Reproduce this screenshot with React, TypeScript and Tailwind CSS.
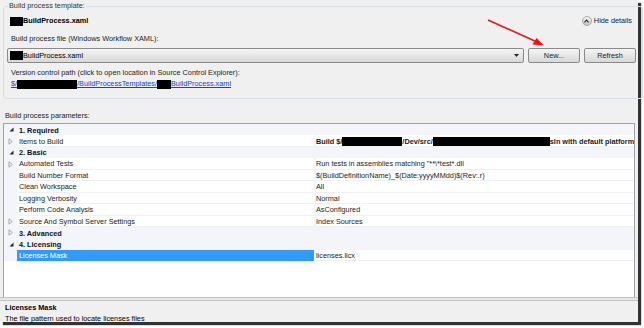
import React from "react";

type Row =
    | { kind: "cat"; label: string; open: boolean }
    | { kind: "prop"; label: string; value: React.ReactNode; expander?: boolean; selected?: boolean; bold?: boolean };

const Redact = ({ w }: { w: number }) => (
    <span className="inline-block h-[9px] bg-black align-middle shrink-0" style={{ width: w }} />
);

const ROWS: Row[] = [
    { kind: "cat", label: "1. Required", open: true },
    {
        kind: "prop",
        label: "Items to Build",
        expander: true,
        bold: true,
        value: (
            <span className="whitespace-nowrap flex items-center">
                Build $/<Redact w={60} />/Dev/src/<Redact w={117} />sln with default platform
            </span>
        ),
    },
    { kind: "cat", label: "2. Basic", open: true },
    { kind: "prop", label: "Automated Tests", expander: true, value: 'Run tests in assemblies matching "**\\*test*.dll' },
    { kind: "prop", label: "Build Number Format", value: "$(BuildDefinitionName)_$(Date:yyyyMMdd)$(Rev:.r)" },
    { kind: "prop", label: "Clean Workspace", value: "All" },
    { kind: "prop", label: "Logging Verbosity", value: "Normal" },
    { kind: "prop", label: "Perform Code Analysis", value: "AsConfigured" },
    { kind: "prop", label: "Source And Symbol Server Settings", expander: true, value: "Index Sources" },
    { kind: "cat", label: "3. Advanced", open: false },
    { kind: "cat", label: "4. Licensing", open: true },
    { kind: "prop", label: "Licenses Mask", value: "licenses.licx", selected: true },
];

function Expander({ open }: { open: boolean }) {
    if (open) {
        return (
            <svg width="5" height="5" viewBox="0 0 5 5">
                <path d="M4.5 0.5 L4.5 4.5 L0.5 4.5 Z" fill="#262626" />
            </svg>
        );
    }
    return (
        <svg width="5" height="7" viewBox="0 0 5 7">
            <path d="M1 0.8 L4.3 3.5 L1 6.2 Z" fill="none" stroke="#a0a0a0" strokeWidth="0.9" />
        </svg>
    );
}

function GridRow({ row }: { row: Row }) {
    if (row.kind === "cat") {
        return (
            <div className="flex h-[11.45px] shrink-0 items-center bg-[#f3f5fa]">
                <div className={`w-[13px] flex items-center ${row.open ? "pl-[5px]" : "pl-[4px]"}`}>
                    <Expander open={row.open} />
                </div>
                <span className="pl-[2px] pt-[1px] font-bold text-[#111]">{row.label}</span>
            </div>
        );
    }
    return (
        <div className="flex h-[11.45px] shrink-0 items-stretch">
            <div className="w-[13px] bg-[#f3f5fa] flex items-center pl-[4px]">
                {row.expander && <Expander open={false} />}
            </div>
            <div
                className={`w-[297px] flex items-center pl-[2px] pt-[1px] border-b ${row.selected ? "bg-[#3399ff] text-white border-[#3399ff]" : "border-[#f0f0f0] text-[#1a1a1a]"
                    }`}
            >
                {row.label}
            </div>
            <div className="w-[2px] bg-[#f4f4f4]" />
            <div className={`flex-1 flex items-center pt-[1px] border-b border-[#f0f0f0] overflow-hidden ${row.bold ? "font-bold" : ""} text-[#1a1a1a]`}>
                {row.value}
            </div>
        </div>
    );
}

const btn =
    "h-[15px] rounded-[2px] border border-[#8a8a8a] bg-gradient-to-b from-[#f5f5f5] to-[#d8d8d8] text-[#222] leading-none";

export default function App() {
    return (
        <div
            className="relative w-[644px] h-[328px] bg-white text-[7.3px] leading-none"
            style={{ fontFamily: '"Liberation Sans", Arial, sans-serif' }}
        >
            <div className="w-[638px] h-[322px] bg-[#f0f0f0] flex flex-col shadow-[3px_3px_1px_rgba(0,0,0,0.8)]">
                {/* template group */}
                <fieldset className="mx-[3px] mt-[2px] h-[97px] shrink-0 border border-[#d8e0e6] rounded-[3px] px-[6px]">
                    <legend className="ml-[-2px] px-[1px] h-[8px] text-[#333]">Build process template:</legend>
                    <div className="flex items-center justify-between h-[14px] mt-[4px]">
                        <span className="font-bold text-black flex items-center">
                            <Redact w={13} />BuildProcess.xaml
                        </span>
                        <span className="flex items-center gap-[2px] pr-[4px] text-[#222]">
                            <span className="w-[10px] h-[10px] rounded-full bg-gradient-to-b from-[#f6f6f6] to-[#c4c4c4] border border-[#a8a8a8] flex items-center justify-center">
                                <svg width="5" height="4" viewBox="0 0 5 4">
                                    <path d="M0.5 3.3 L2.5 1 L4.5 3.3" fill="none" stroke="#222" strokeWidth="1.1" />
                                </svg>
                            </span>
                            Hide details
                        </span>
                    </div>
                    <div className="mt-[6px] h-[10px] flex items-center pl-[1px] text-[#222]">
                        Build process file (Windows Workflow XAML):
                    </div>
                    <div className="flex items-center mt-[4px] ml-[-3px] gap-[4px]">
                        <div className="w-[517px] h-[15px] rounded-[2px] border border-[#8a8a8a] bg-gradient-to-b from-[#f5f5f5] to-[#d8d8d8] flex items-center justify-between pl-[2px] pr-[4px]">
                            <span className="flex items-center text-black">
                                <Redact w={13} />BuildProcess.xaml
                            </span>
                            <svg width="5" height="3" viewBox="0 0 5 3">
                                <path d="M0 0 L5 0 L2.5 3 Z" fill="#222" />
                            </svg>
                        </div>
                        <button className={`w-[52px] ${btn}`}>New...</button>
                        <button className={`w-[52px] ${btn}`}>Refresh</button>
                    </div>
                    <div className="mt-[5px] h-[10px] flex items-center pl-[1px] text-[#222]">
                        Version control path (click to open location in Source Control Explorer):
                    </div>
                    <div className="mt-[1px] h-[10px] pl-[1px] text-[#1a3fd0] underline flex items-center">
                        $/<Redact w={60} />/BuildProcessTemplates/<Redact w={14} />BuildProcess.xaml
                    </div>
                </fieldset>

                <div className="mt-[12px] h-[10px] shrink-0 flex items-center pl-[5px] text-[#222]">Build process parameters:</div>

                <div className="mt-[2px] mx-[3px] h-[174px] shrink-0 bg-white border border-[#9ea3aa] border-b-0 flex flex-col overflow-hidden">
                    {ROWS.map((r, i) => (
                        <GridRow key={i} row={r} />
                    ))}
                </div>
                <div className="h-[4px] shrink-0 border-t border-b border-[#c4c4c4] bg-[#e8e8e8]" />
                <div className="pl-[5px] mt-[2px] shrink-0 flex flex-col gap-[1px] text-black">
                    <span className="h-[10px] flex items-center font-bold">Licenses Mask</span>
                    <span className="h-[10px] flex items-center">The file pattern used to locate licenses files</span>
                </div>
            </div>

            {/* annotation arrow */}
            <svg className="absolute left-0 top-0 pointer-events-none" width="644" height="328">
                <line x1="488" y1="20" x2="537" y2="42" stroke="#e8141a" strokeWidth="1.6" />
                <path d="M544 45.5 L532.5 44.5 L536.5 38 Z" fill="#e8141a" />
            </svg>
        </div>
    );
}
